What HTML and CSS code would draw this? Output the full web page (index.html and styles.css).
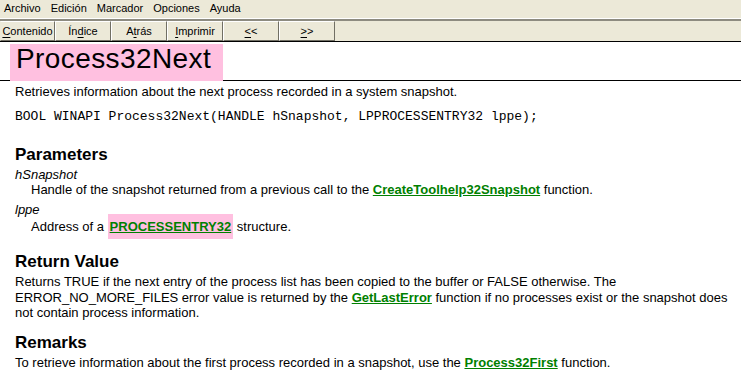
FILE: index.html
```html
<!DOCTYPE html>
<html lang="es">
  <head>
    <meta charset="UTF-8" />
    <title>Process32Next</title>
    <link rel="stylesheet" href="styles.css">
  </head>
  <body>
    <div class="menubar">
      <span class="menu-item">Archivo</span>
      <span class="menu-item">Edición</span>
      <span class="menu-item">Marcador</span>
      <span class="menu-item">Opciones</span>
      <span class="menu-item">Ayuda</span>
    </div>

    <div class="toolbar">
      <button class="tool-btn first"><u>C</u>ontenido</button>
      <button class="tool-btn">Ín<u>d</u>ice</button>
      <button class="tool-btn">A<u>t</u>rás</button>
      <button class="tool-btn"><u>I</u>mprimir</button>
      <button class="tool-btn"><u>&lt;</u>&lt;</button>
      <button class="tool-btn"><u>&gt;</u>&gt;</button>
    </div>

    <div class="page">
      <div class="title-row">
        <h1 class="title">Process32Next</h1>
      </div>

      <p class="intro">Retrieves information about the next process recorded in a system snapshot.</p>
      <pre class="syntax">BOOL WINAPI Process32Next(HANDLE hSnapshot, LPPROCESSENTRY32 lppe);</pre>

      <h2 class="section params-head">Parameters</h2>
      <div class="param-name">hSnapshot</div>
      <div class="param-desc">Handle of the snapshot returned from a previous call to the <a href="#">CreateToolhelp32Snapshot</a> function.</div>
      <div class="param-name lppe">lppe</div>
      <div class="param-desc">Address of a <span class="hit"><a href="#">PROCESSENTRY32</a></span> structure.</div>

      <h2 class="section return-head">Return Value</h2>
      <p class="text">Returns TRUE if the next entry of the process list has been copied to the buffer or FALSE otherwise. The ERROR_NO_MORE_FILES error value is returned by the <a href="#">GetLastError</a> function if no processes exist or the snapshot does not contain process information.</p>

      <h2 class="section remarks-head">Remarks</h2>
      <p class="text">To retrieve information about the first process recorded in a snapshot, use the <a href="#">Process32First</a> function.</p>
    </div>
  </body>
</html>
```

FILE: styles.css
```css
* {
  margin: 0;
  padding: 0;
  box-sizing: border-box;
}

body {
  font-family: "Liberation Sans", Arial, sans-serif;
  background: #ffffff;
  color: #000000;
  width: 741px;
  height: 388px;
  overflow: hidden;
}

/* menu + toolbar */

.menubar {
  display: flex;
  height: 21px;
  background: #ece9d8;
  border-bottom: 2px solid #8d8b80;
  box-shadow: inset 0 -1px 0 #ffffff;
  font-size: 11px;
  line-height: 16px;
}

.menu-item {
  padding: 0 5px;
}

.menu-item:first-child {
  padding-left: 4px;
}

.toolbar {
  display: flex;
  height: 21px;
  background: #ece9d8;
  border-bottom: 1px solid #000000;
}

.tool-btn {
  width: 56px;
  height: 20px;
  background: #ece9d8;
  border: 1px solid;
  border-color: #ffffff #716f64 #716f64 #ffffff;
  font-family: "Liberation Sans", Arial, sans-serif;
  font-size: 11px;
  line-height: 16px;
  color: #000000;
  text-align: center;
}

.tool-btn.first {
  width: 55px;
  border-left-color: #ece9d8;
}

.tool-btn u {
  text-underline-offset: 2px;
}

/* page body */

.page {
  font-size: 13px;
  line-height: 15px;
}

.title-row {
  border-bottom: 1px solid #000000;
  height: 37px;
  margin-top: 2px;
}

.title {
  display: inline-block;
  margin-left: 10px;
  height: 37px;
  padding: 0 12px 0 6px;
  background: #ffc0e0;
  font-size: 28px;
  line-height: 30px;
  font-weight: normal;
  letter-spacing: 0.4px;
}

.intro {
  margin: 3px 0 0 15px;
}

.syntax {
  margin: 10px 0 0 15px;
  font-family: "Liberation Mono", "Courier New", monospace;
  font-size: 13px;
  line-height: 15px;
}

.section {
  font-size: 17px;
  line-height: 20px;
  margin-left: 15px;
}

.params-head {
  margin-top: 21px;
}

.param-name {
  margin: 2px 0 0 15px;
  font-style: italic;
}

.param-name.lppe {
  margin-top: 5px;
}

.param-desc {
  margin: 0 0 0 31px;
}

.param-name.lppe + .param-desc {
  margin-top: 2px;
}

.hit {
  background: #ffc0e0;
  padding: 5px 2px 5px 2px;
}

.return-head {
  margin-top: 18px;
}

.remarks-head {
  margin-top: 12px;
}

.text {
  margin: 2px 0 0 15px;
  line-height: 15.5px;
}

a {
  color: #008000;
  font-weight: bold;
  text-decoration: underline;
}
```
